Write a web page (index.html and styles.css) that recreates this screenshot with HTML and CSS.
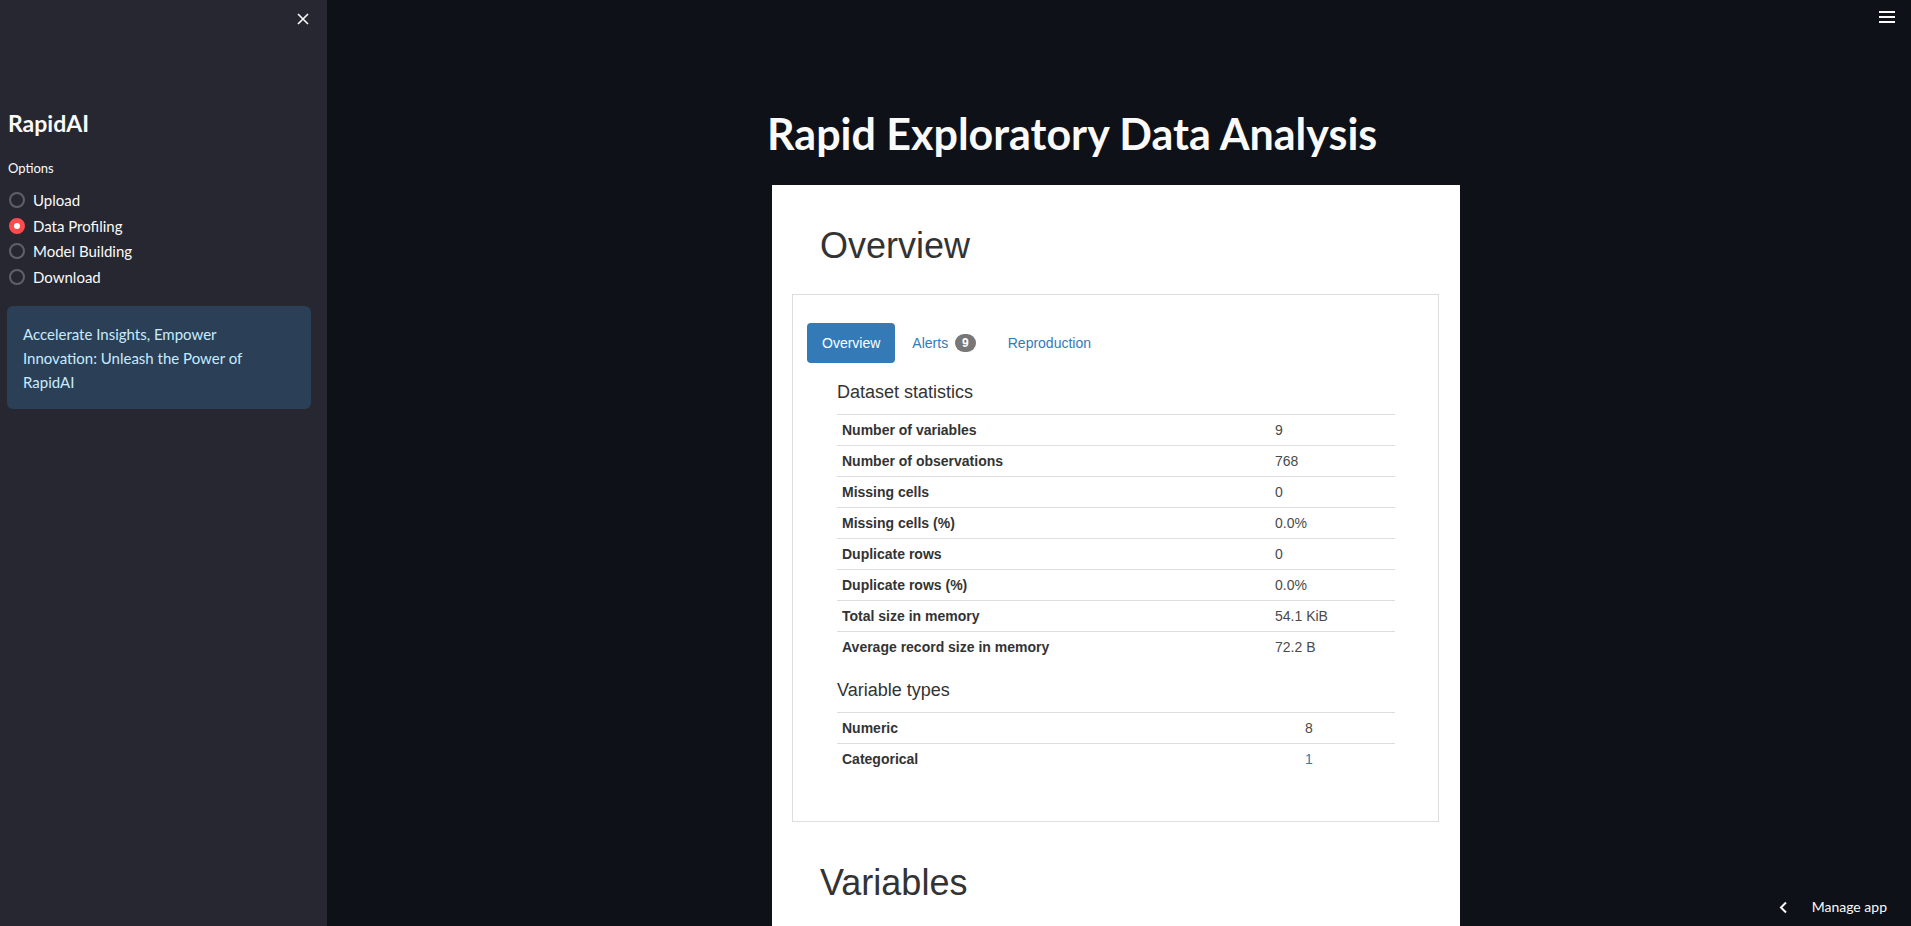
FILE: index.html
```html
<!DOCTYPE html>
<html lang="en">
<head>
<meta charset="utf-8">
<title>RapidAI - Rapid Exploratory Data Analysis</title>
<link rel="stylesheet" href="styles.css">
</head>
<body>
<div class="app">
  <aside class="sidebar">
    <div class="sb-top">
      <button class="icon-btn close" aria-label="Close sidebar">
        <svg width="12" height="12" viewBox="0 0 12 12"><path d="M1 1L11 11M11 1L1 11" stroke="#fafafa" stroke-width="1.6" fill="none"/></svg>
      </button>
    </div>
    <div class="sb-content">
      <h2 class="brand">RapidAI</h2>
      <div class="opt-label">Options</div>
      <div class="radios">
        <label class="radio"><span class="dot"></span><span>Upload</span></label>
        <label class="radio checked"><span class="dot"></span><span>Data Profiling</span></label>
        <label class="radio"><span class="dot"></span><span>Model Building</span></label>
        <label class="radio"><span class="dot"></span><span>Download</span></label>
      </div>
      <div class="info">Accelerate Insights, Empower<br>Innovation: Unleash the Power of<br>RapidAI</div>
    </div>
  </aside>
  <main class="main">
    <button class="icon-btn menu" aria-label="Menu">
      <svg width="16" height="12" viewBox="0 0 16 12"><path d="M0 1H16M0 6H16M0 11H16" stroke="#fafafa" stroke-width="2" fill="none"/></svg>
    </button>
    <div class="block">
      <h1 class="title">Rapid Exploratory Data Analysis</h1>
      <div class="report">
        <h1 class="rep-h1">Overview</h1>
        <div class="panel">
          <ul class="pills">
            <li class="active"><a>Overview</a></li>
            <li><a>Alerts <span class="badge">9</span></a></li>
            <li><a>Reproduction</a></li>
          </ul>
          <div class="tab-body">
            <p class="h4">Dataset statistics</p>
            <table class="stats">
              <tbody>
                <tr><th>Number of variables</th><td>9</td></tr>
                <tr><th>Number of observations</th><td>768</td></tr>
                <tr><th>Missing cells</th><td>0</td></tr>
                <tr><th>Missing cells (%)</th><td>0.0%</td></tr>
                <tr><th>Duplicate rows</th><td>0</td></tr>
                <tr><th>Duplicate rows (%)</th><td>0.0%</td></tr>
                <tr><th>Total size in memory</th><td>54.1 KiB</td></tr>
                <tr><th>Average record size in memory</th><td>72.2 B</td></tr>
              </tbody>
            </table>
            <p class="h4">Variable types</p>
            <table class="stats types">
              <tbody>
                <tr><th>Numeric</th><td>8</td></tr>
                <tr><th>Categorical</th><td><a class="link">1</a></td></tr>
              </tbody>
            </table>
          </div>
        </div>
        <h1 class="rep-h1 variables">Variables</h1>
      </div>
    </div>
    <div class="manage">
      <svg width="9" height="13" viewBox="0 0 9 13"><path d="M7 1.5L2 6.5L7 11.5" stroke="#fafafa" stroke-width="2" fill="none"/></svg>
      <span>Manage app</span>
    </div>
  </main>
</div>
</body>
</html>
```

FILE: styles.css
```css
* { box-sizing: border-box; }
html, body { margin: 0; padding: 0; height: 100%; }
body {
  background: #0e1117;
  color: #fafafa;
  font-family: "Lato", "Noto Sans", sans-serif;
  overflow: hidden;
}
.app {
  display: flex;
  height: 926px;
  overflow: hidden;
}
.icon-btn {
  background: none;
  border: 0;
  padding: 0;
  margin: 0;
  display: block;
  line-height: 0;
  cursor: pointer;
}

/* Sidebar */
.sidebar {
  width: 327px;
  flex: 0 0 327px;
  background: #262730;
  padding: 0 16px 0 7px;
}
.sb-top {
  display: flex;
  justify-content: flex-end;
  padding: 11px 2px 0 0;
  height: 26px;
}
.sb-content {
  padding-top: 84px;
}
.brand {
  margin: 0;
  font-size: 23px;
  font-weight: 700;
  line-height: 1.2;
  color: #fafafa;
  padding-left: 1px;
}
.opt-label {
  margin-top: 22px;
  font-size: 13px;
  line-height: 16px;
  color: #fafafa;
  padding-left: 1px;
}
.radios {
  margin-top: 12px;
  display: flex;
  flex-direction: column;
}
.radio {
  display: flex;
  align-items: center;
  height: 25.5px;
  font-size: 15px;
  color: #fafafa;
  gap: 8px;
  padding-left: 2px;
}
.dot {
  width: 16px;
  height: 16px;
  border-radius: 50%;
  border: 2px solid #5f6068;
  flex: 0 0 16px;
}
.radio.checked .dot {
  background: #ffffff;
  border: 5px solid #ff4b4b;
}
.info {
  margin-top: 16px;
  background: #2b3f57;
  border-radius: 6px;
  padding: 16px 16px 15px;
  font-size: 15px;
  line-height: 24.3px;
  color: #c7ebff;
}

/* Main */
.main {
  flex: 1;
  position: relative;
  min-width: 0;
}
.menu {
  position: absolute;
  top: 11px;
  right: 16px;
}
.block {
  width: 704px;
  margin: 0 auto;
  padding-top: 108px;
}
.title {
  margin: 0 0 25px;
  font-size: 43px;
  line-height: 52px;
  font-weight: 700;
  color: #fafafa;
  padding-left: 0;
}

/* Embedded report */
.report {
  margin-left: 5px;
  width: 688px;
  height: 900px;
  background: #ffffff;
  color: #333333;
  font-family: "Liberation Sans", Arial, sans-serif;
  font-size: 14px;
  line-height: 1.42857;
  padding: 41px 21px 0 20px;
}
.rep-h1 {
  margin: 0 0 28px 28px;
  font-size: 36px;
  font-weight: 400;
  line-height: 39.6px;
  color: #333333;
}
.rep-h1.variables {
  margin-top: 41px;
}
.panel {
  border: 1px solid #dddddd;
  padding: 28px 14px 47px 14px;
}
.pills {
  list-style: none;
  margin: 0;
  padding: 0;
  display: flex;
  gap: 2px;
}
.pills a {
  display: block;
  padding: 10px 15px;
  color: #337ab7;
  border-radius: 4px;
  line-height: 20px;
}
.pills .active a {
  background: #337ab7;
  color: #ffffff;
}
.badge {
  display: inline-block;
  min-width: 10px;
  padding: 3px 7px;
  font-size: 12px;
  font-weight: 700;
  line-height: 1;
  color: #ffffff;
  background: #777777;
  border-radius: 10px;
  vertical-align: middle;
  margin-left: 3px;
  position: relative;
  top: -1px;
}
.tab-body {
  padding: 0 30px;
}
.h4 {
  margin: 20px 0 11px;
  font-size: 18px;
  line-height: 19.8px;
  color: #333333;
}
.stats {
  width: 558px;
  border-collapse: collapse;
  border-spacing: 0;
}
.stats + .h4 {
  margin-top: 19px;
  margin-bottom: 12px;
}
.stats th, .stats td {
  padding: 5px;
  border-top: 1px solid #dddddd;
  text-align: left;
  vertical-align: top;
  line-height: 20px;
}
.stats th {
  width: 433px;
  font-weight: 700;
  color: #333333;
}
.stats td {
  font-weight: 400;
  color: #4a4a4a;
}
.types th {
  width: 463px;
}
.link {
  color: #337ab7;
}

/* Manage app */
.manage {
  position: absolute;
  right: 24px;
  bottom: 10px;
  display: flex;
  align-items: center;
  gap: 24px;
  font-size: 14px;
  line-height: 18px;
  color: #fafafa;
}
```
